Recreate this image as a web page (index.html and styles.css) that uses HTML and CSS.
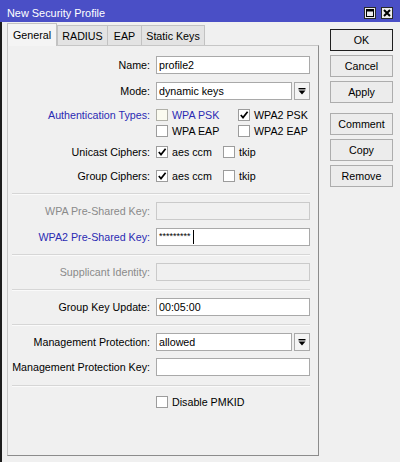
FILE: index.html
```html
<!DOCTYPE html>
<html>
<head>
<meta charset="utf-8">
<title>New Security Profile</title>
<link rel="stylesheet" href="styles.css">
</head>
<body>
<div class="window">
  <div class="titlebar">
    <span class="title">New Security Profile</span>
    <div class="tb-buttons">
      <span class="tb-btn">
        <svg width="10" height="10" viewBox="0 0 10 10"><rect x="1.5" y="1.5" width="7" height="7" fill="none" stroke="#000" stroke-width="1"/><rect x="1" y="1" width="8" height="2.5" fill="#000"/></svg>
      </span>
      <span class="tb-btn">
        <svg width="10" height="10" viewBox="0 0 10 10"><path d="M2 2 L8 8 M8 2 L2 8" stroke="#000" stroke-width="2" fill="none"/></svg>
      </span>
    </div>
  </div>
  <div class="main">
    <div class="tabs-area">
      <div class="tabstrip">
        <span class="tab active tab-general">General</span>
        <span class="tab tab-radius">RADIUS</span>
        <span class="tab tab-eap">EAP</span>
        <span class="tab tab-static">Static Keys</span>
      </div>
      <div class="panel">
        <div class="row first">
          <span class="label">Name:</span>
          <div class="input">profile2</div>
        </div>
        <div class="row">
          <span class="label">Mode:</span>
          <div class="combo">
            <div class="input select">dynamic keys</div>
            <span class="drop"><svg width="8" height="7" viewBox="0 0 8 7"><rect x="0.5" y="0" width="7" height="1.4" fill="#000"/><path d="M0.5 2.5 L7.5 2.5 L4 6.5 Z" fill="#000"/></svg></span>
          </div>
        </div>
        <div class="row check auth-first">
          <span class="label blue">Authentication Types:</span>
          <div class="checks">
            <span class="cb-item auth-col"><span class="cb hover"></span><span class="blue">WPA PSK</span></span>
            <span class="cb-item"><span class="cb"><svg width="10" height="10" viewBox="0 0 10 10"><path d="M1.8 5 L4 7.6 L8.6 1.8" stroke="#000" stroke-width="1.7" fill="none"/></svg></span><span>WPA2 PSK</span></span>
          </div>
        </div>
        <div class="row check cont">
          <span class="label"></span>
          <div class="checks">
            <span class="cb-item auth-col"><span class="cb"></span><span>WPA EAP</span></span>
            <span class="cb-item"><span class="cb"></span><span>WPA2 EAP</span></span>
          </div>
        </div>
        <div class="row cipher-first">
          <span class="label">Unicast Ciphers:</span>
          <div class="checks">
            <span class="cb-item cipher-col"><span class="cb"><svg width="10" height="10" viewBox="0 0 10 10"><path d="M1.8 5 L4 7.6 L8.6 1.8" stroke="#000" stroke-width="1.7" fill="none"/></svg></span><span>aes ccm</span></span>
            <span class="cb-item"><span class="cb"></span><span>tkip</span></span>
          </div>
        </div>
        <div class="row cipher-next">
          <span class="label">Group Ciphers:</span>
          <div class="checks">
            <span class="cb-item cipher-col"><span class="cb"><svg width="10" height="10" viewBox="0 0 10 10"><path d="M1.8 5 L4 7.6 L8.6 1.8" stroke="#000" stroke-width="1.7" fill="none"/></svg></span><span>aes ccm</span></span>
            <span class="cb-item"><span class="cb"></span><span>tkip</span></span>
          </div>
        </div>
        <div class="sep"></div>
        <div class="row">
          <span class="label gray">WPA Pre-Shared Key:</span>
          <div class="input disabled"></div>
        </div>
        <div class="row">
          <span class="label blue">WPA2 Pre-Shared Key:</span>
          <div class="input"><span class="pw">*********</span><span class="caret"></span></div>
        </div>
        <div class="sep"></div>
        <div class="row">
          <span class="label gray">Supplicant Identity:</span>
          <div class="input disabled"></div>
        </div>
        <div class="sep"></div>
        <div class="row">
          <span class="label">Group Key Update:</span>
          <div class="input">00:05:00</div>
        </div>
        <div class="sep"></div>
        <div class="row">
          <span class="label">Management Protection:</span>
          <div class="combo">
            <div class="input select">allowed</div>
            <span class="drop"><svg width="8" height="7" viewBox="0 0 8 7"><rect x="0.5" y="0" width="7" height="1.4" fill="#000"/><path d="M0.5 2.5 L7.5 2.5 L4 6.5 Z" fill="#000"/></svg></span>
          </div>
        </div>
        <div class="row mpk">
          <span class="label">Management Protection Key:</span>
          <div class="input"></div>
        </div>
        <div class="sep last"></div>
        <div class="row check pmkid">
          <span class="label"></span>
          <div class="checks">
            <span class="cb-item"><span class="cb"></span><span>Disable PMKID</span></span>
          </div>
        </div>
      </div>
    </div>
    <div class="side">
      <button class="btn default">OK</button>
      <button class="btn">Cancel</button>
      <button class="btn">Apply</button>
      <button class="btn group">Comment</button>
      <button class="btn">Copy</button>
      <button class="btn">Remove</button>
    </div>
  </div>
</div>
</body>
</html>
```

FILE: styles.css
```css
* { box-sizing: border-box; }
html, body { margin: 0; padding: 0; }
body {
  width: 400px;
  height: 462px;
  overflow: hidden;
  background: #f0f0f0;
  font-family: "Liberation Sans", Arial, sans-serif;
  font-size: 10.7px;
  color: #000;
}
.window {
  width: 400px;
  height: 462px;
  display: flex;
  flex-direction: column;
}
.titlebar {
  height: 22px;
  flex: none;
  background: #4a4fc6;
  color: #fff;
  display: flex;
  align-items: center;
  justify-content: space-between;
  padding: 3px 7px 0 7px;
}
.title { font-size: 10.9px; }
.tb-buttons { display: flex; gap: 5px; }
.tb-btn {
  width: 12px;
  height: 12px;
  background: #ececec;
  border: 1px solid #2a2a2a;
  display: flex;
  align-items: center;
  justify-content: center;
}
.tb-btn svg { display: block; }
.main {
  flex: 1;
  display: flex;
  border-left: 2px solid #1c1c1c;
  padding: 1px 0 0 5px;
}
.tabs-area {
  width: 312px;
  height: 433px;
  display: flex;
  flex-direction: column;
}
.tabstrip {
  height: 22px;
  display: flex;
  align-items: flex-end;
  position: relative;
  z-index: 1;
}
.tab {
  height: 20px;
  background: #e3e3e3;
  border: 1px solid #c2c2c2;
  border-bottom: none;
  margin-left: -1px;
  display: flex;
  align-items: center;
  justify-content: center;
}
.tab.active {
  height: 23px;
  margin-left: 0;
  margin-bottom: -1px;
  background: #f4f4f4;
  border-color: #c2c2c2;
}
.tab-general { width: 50px; }
.tab-radius { width: 51px; margin-left: 0; }
.tab-eap { width: 35px; }
.tab-static { width: 64px; }
.panel {
  flex: 1;
  background: #f0f0f0;
  border: 1px solid;
  border-color: #c6c6c6 #8c8c8c #8c8c8c #c6c6c6;
  padding-top: 10px;
  display: flex;
  flex-direction: column;
}
.row {
  height: 18px;
  margin-top: 8px;
  display: grid;
  grid-template-columns: 142px 154px;
  column-gap: 6px;
  align-items: center;
}
.row.first { margin-top: 0; }
.row.check { height: 16px; }
.row.auth-first { margin-top: 7px; }
.row.cont { margin-top: 0; }
.row.cipher-first { margin-top: 4px; }
.row.cipher-next { margin-top: 6px; }
.row.mpk { margin-top: 7px; }
.row.pmkid { margin-top: 4px; }
.sep + .row { margin-top: 7px; }
.label {
  text-align: right;
  white-space: nowrap;
}
.blue { color: #2b2bb3; }
.gray { color: #8a8a8a; }
.input {
  height: 18px;
  background: #fff;
  border: 1px solid #a9a9a9;
  padding-left: 2px;
  line-height: 16px;
  white-space: nowrap;
  overflow: hidden;
  display: flex;
  align-items: center;
}
.input.disabled {
  background: #f0f0f0;
  border-color: #cacaca;
}
.combo {
  display: flex;
  gap: 2px;
  height: 18px;
}
.input.select { width: 136px; }
.drop {
  width: 16px;
  height: 18px;
  background: #f4f4f4;
  border: 1px solid #a9a9a9;
  display: flex;
  align-items: center;
  justify-content: center;
}
.drop svg { display: block; }
.checks {
  display: flex;
  align-items: center;
  height: 16px;
}
.cb-item {
  display: flex;
  align-items: center;
  gap: 4px;
}
.auth-col { width: 82px; }
.cipher-col { width: 67px; }
.cb {
  width: 12px;
  height: 12px;
  background: #fff;
  border: 1px solid #9c9c9c;
  display: flex;
  align-items: center;
  justify-content: center;
}
.cb.hover { background: #fbfbf0; border-color: #b0b0a8; }
.cb svg { display: block; }
.pw { letter-spacing: 0; font-size: 9px; position: relative; top: -1px; }
.caret {
  display: inline-block;
  width: 1px;
  height: 14px;
  background: #000;
  margin-left: 2px;
}
.sep {
  height: 2px;
  margin: 8px 8px 0 4px;
  border-top: 1px solid #d6d6d6;
  border-bottom: 1px solid #fafafa;
}
.sep.last { margin-top: 9px; }
.side {
  width: 63px;
  margin: 6px 0 0 11px;
  display: flex;
  flex-direction: column;
  gap: 4px;
}
.btn {
  height: 22px;
  padding: 0;
  font: inherit;
  color: #000;
  background: #ececec;
  border: 1px solid #adadad;
  text-align: center;
}
.btn.default { border-color: #1f1f1f; }
.btn.group { margin-top: 6px; }
```
